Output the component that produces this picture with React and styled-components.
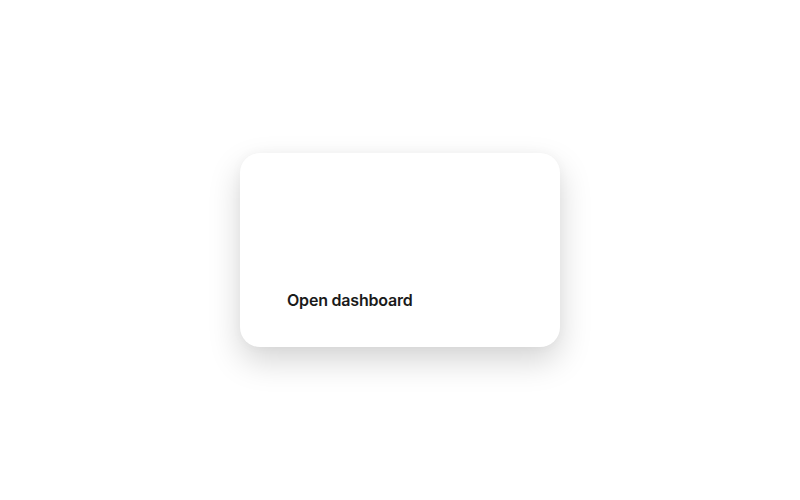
import React from "react";
import styled, { createGlobalStyle } from "styled-components";

const GlobalStyle = createGlobalStyle`
  html, body {
    margin: 0;
    padding: 0;
    background: #ffffff;
  }
  body {
    font-family: Inter, "Noto Sans", sans-serif;
  }
`;

const Page = styled.div`
  width: 800px;
  height: 500px;
  display: flex;
  align-items: center;
  justify-content: center;
`;

const Card = styled.a`
  width: 320px;
  height: 194px;
  box-sizing: border-box;
  background: #ffffff;
  border-radius: 20px;
  box-shadow: 0 14px 32px rgba(0, 0, 0, 0.17), 0 0 12px rgba(0, 0, 0, 0.03);
  display: flex;
  flex-direction: column;
  justify-content: flex-end;
  padding: 0 47px 35px;
  text-decoration: none;
`;

const Label = styled.span`
  font-size: 16px;
  line-height: 24px;
  font-weight: 600;
  letter-spacing: -0.2px;
  color: #1a1a1a;
`;

export default function App() {
  return (
    <>
      <GlobalStyle />
      <Page>
        <Card href="#">
          <Label>Open dashboard</Label>
        </Card>
      </Page>
    </>
  );
}
